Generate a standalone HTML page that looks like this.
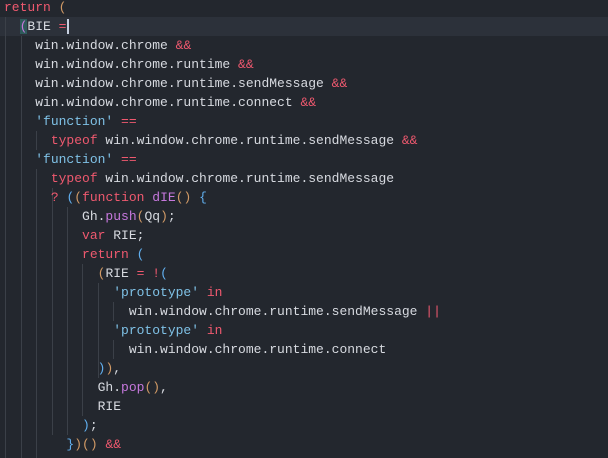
<!DOCTYPE html>
<html><head><style>
body{margin:0;width:608px;height:458px;background:#23272e;overflow:hidden;position:relative;font-family:"Liberation Mono",monospace;font-size:13px;color:#d7dae0}
.l{position:absolute;left:4px;height:19px;line-height:19px;white-space:pre}
.k{color:#ef596f}.s{color:#7fc1e6}.m{color:#c678dd}.o{color:#d19a66}.p{color:#c678dd}.b{color:#61afef}
.g{position:absolute;width:1px;background:#3b4048}
.cur{position:absolute;left:0;top:17px;width:608px;height:19px;background:#2c313a}
</style></head><body>
<div class="cur"></div>
<div class="g" style="left:5px;top:17px;height:441px"></div>
<div class="g" style="left:21px;top:36px;height:422px"></div>
<div class="g" style="left:36px;top:131px;height:19px"></div>
<div class="g" style="left:36px;top:169px;height:289px"></div>
<div class="g" style="left:52px;top:188px;height:247px"></div>
<div class="g" style="left:67px;top:207px;height:228px"></div>
<div class="g" style="left:82px;top:264px;height:152px"></div>
<div class="g" style="left:98px;top:283px;height:95px"></div>
<div class="g" style="left:113px;top:302px;height:19px"></div>
<div class="g" style="left:113px;top:340px;height:19px"></div>
<div class="l" style="top:-2px"><span class="k">return</span> <span class="o">(</span></div>
<div class="l" style="top:17px">  <span class="p" style="background:#2d5a5a">(</span>BIE <span class="k">=</span><span style="border-left:2px solid #c8d0e0;margin-left:1px"></span></div>
<div class="l" style="top:36px">    win.window.chrome <span class="k">&amp;&amp;</span></div>
<div class="l" style="top:55px">    win.window.chrome.runtime <span class="k">&amp;&amp;</span></div>
<div class="l" style="top:74px">    win.window.chrome.runtime.sendMessage <span class="k">&amp;&amp;</span></div>
<div class="l" style="top:93px">    win.window.chrome.runtime.connect <span class="k">&amp;&amp;</span></div>
<div class="l" style="top:112px">    <span class="s">'function'</span> <span class="k">==</span></div>
<div class="l" style="top:131px">      <span class="k">typeof</span> win.window.chrome.runtime.sendMessage <span class="k">&amp;&amp;</span></div>
<div class="l" style="top:150px">    <span class="s">'function'</span> <span class="k">==</span></div>
<div class="l" style="top:169px">      <span class="k">typeof</span> win.window.chrome.runtime.sendMessage</div>
<div class="l" style="top:188px">      <span class="k">?</span> <span class="b">(</span><span class="o">(</span><span class="k">function</span> <span class="m">dIE</span><span class="o">()</span> <span class="b">{</span></div>
<div class="l" style="top:207px">          Gh.<span class="m">push</span><span class="o">(</span>Qq<span class="o">)</span>;</div>
<div class="l" style="top:226px">          <span class="k">var</span> RIE;</div>
<div class="l" style="top:245px">          <span class="k">return</span> <span class="b">(</span></div>
<div class="l" style="top:264px">            <span class="o">(</span>RIE <span class="k">=</span> <span class="k">!</span><span class="b">(</span></div>
<div class="l" style="top:283px">              <span class="s">'prototype'</span> <span class="k">in</span></div>
<div class="l" style="top:302px">                win.window.chrome.runtime.sendMessage <span class="k">||</span></div>
<div class="l" style="top:321px">              <span class="s">'prototype'</span> <span class="k">in</span></div>
<div class="l" style="top:340px">                win.window.chrome.runtime.connect</div>
<div class="l" style="top:359px">            <span class="b">)</span><span class="o">)</span>,</div>
<div class="l" style="top:378px">            Gh.<span class="m">pop</span><span class="o">()</span>,</div>
<div class="l" style="top:397px">            RIE</div>
<div class="l" style="top:416px">          <span class="b">)</span>;</div>
<div class="l" style="top:435px">        <span class="b">}</span><span class="o">)()</span> <span class="k">&amp;&amp;</span></div>
</body></html>
